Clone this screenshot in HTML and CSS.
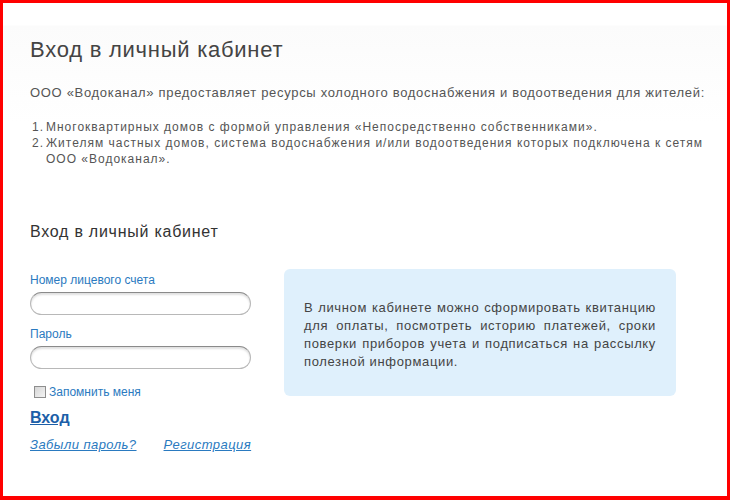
FILE: index.html
```html
<!DOCTYPE html>
<html lang="ru">
<head>
  <meta charset="UTF-8">
  <title>Вход в личный кабинет</title>
  <link rel="stylesheet" href="styles.css">
</head>
<body>
<div class="page">
  <h1>Вход в личный кабинет</h1>
  <p class="intro">ООО «Водоканал» предоставляет ресурсы холодного водоснабжения и водоотведения для жителей:</p>
  <ol class="intro-list">
    <li>Многоквартирных домов с формой управления «Непосредственно собственниками».</li>
    <li>Жителям частных домов, система водоснабжения и/или водоотведения которых подключена к сетям ООО «Водоканал».</li>
  </ol>

  <h2>Вход в личный кабинет</h2>
  <div class="login">
    <form class="login-form">
      <label for="account">Номер лицевого счета</label>
      <input type="text" id="account" class="input-field">
      <label for="password">Пароль</label>
      <input type="password" id="password" class="input-field">
      <div class="remember">
        <input type="checkbox" id="remember">
        <label for="remember">Запомнить меня</label>
      </div>
      <a href="#" class="enter">Вход</a>
      <div class="links">
        <a href="#">Забыли пароль?</a>
        <a href="#">Регистрация</a>
      </div>
    </form>
    <div class="info">
      В личном кабинете можно сформировать квитанцию для оплаты, посмотреть историю платежей, сроки поверки приборов учета и подписаться на рассылку полезной информации.
    </div>
  </div>
</div>
</body>
</html>
```

FILE: styles.css
```css
html, body {
  margin: 0;
  padding: 0;
}

body {
  font-family: Arial, "Liberation Sans", sans-serif;
  color: #444;
  background: #fff;
}

.page {
  box-sizing: border-box;
  width: 730px;
  height: 500px;
  border-style: solid;
  border-color: #ff0000;
  border-width: 3px 3px 4px 3px;
  padding: 34px 16px 0 27px;
  background: linear-gradient(#fff 22px, #fbfbfb 23px, #fff 120px);
}

h1 {
  margin: 0 0 22px;
  font-size: 22px;
  font-weight: normal;
  letter-spacing: 0.75px;
  color: #444;
}

.intro {
  margin: 0 0 19px;
  font-size: 13px;
  letter-spacing: 0.68px;
  color: #555;
}

/* numbered list with its own counter so the numbers sit at a fixed column */
.intro-list {
  list-style: none;
  counter-reset: item;
  margin: 0;
  padding-left: 2px;
  font-size: 12px;
  line-height: 16px;
  letter-spacing: 1px;
  color: #555;
}

.intro-list li {
  display: flex;
  counter-increment: item;
}

.intro-list li::before {
  content: counter(item) ".";
  flex: none;
  width: 14px;
  letter-spacing: 1px;
}

h2 {
  margin: 56px 0 22px;
  font-size: 16px;
  font-weight: normal;
  letter-spacing: 0.75px;
  color: #333;
}

.login {
  display: flex;
  align-items: flex-start;
}

.login-form {
  flex: none;
  width: 221px;
  padding-top: 10px;
  display: flex;
  flex-direction: column;
}

.login-form > label {
  font-size: 12px;
  color: #2a7ac0;
  margin-bottom: 5px;
}

.input-field {
  box-sizing: border-box;
  width: 221px;
  height: 23px;
  margin: 0 0 12px;
  border: 1px solid #b8b8b8;
  border-top-color: #8a8a8a;
  border-radius: 12px;
  box-shadow: inset 0 2px 2px rgba(0, 0, 0, 0.12);
  background: #fff;
  outline: none;
}

.remember {
  display: flex;
  align-items: center;
  margin: 4px 0 10px 4px;
}

.remember input {
  appearance: none;
  box-sizing: border-box;
  margin: 0 3px 0 0;
  width: 12px;
  height: 12px;
  border: 1px solid #8e8e8e;
  background: linear-gradient(135deg, #d6d6d6, #f4f4f4);
}

.remember label {
  font-size: 12px;
  color: #2a7ac0;
}

.enter {
  font-size: 16px;
  font-weight: bold;
  color: #1d5fa8;
  align-self: flex-start;
}

.links {
  margin-top: 10px;
  display: flex;
  gap: 27px;
  white-space: nowrap;
}

.links a {
  font-size: 13px;
  font-style: italic;
  letter-spacing: 0.45px;
  color: #2a7ac0;
}

.info {
  box-sizing: border-box;
  width: 392px;
  height: 127px;
  margin: 6px 0 0 33px;
  padding: 30px 20px 0;
  border-radius: 6px;
  background: #dff0fc;
  font-size: 13px;
  line-height: 18px;
  letter-spacing: 0.65px;
  text-align: justify;
  color: #444;
}
```
